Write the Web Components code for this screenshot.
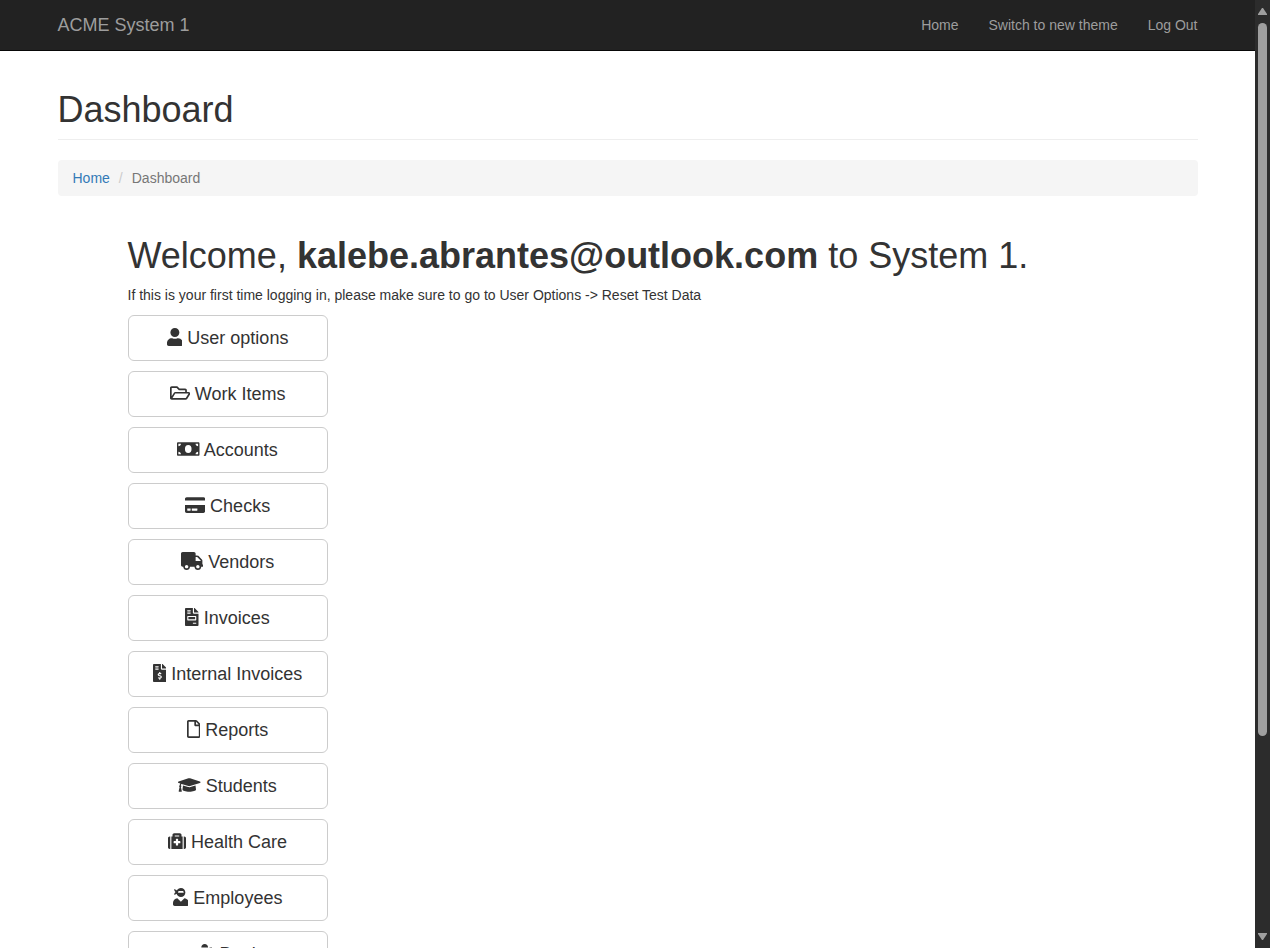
<!DOCTYPE html>
<html lang="en">
<head>
<meta charset="utf-8">
<title>ACME System 1 - Dashboard</title>
<style>
html, body { margin: 0; height: 100%; overflow: hidden; background: #fff; }
body { font: 14px/20px "Liberation Sans", Arial, sans-serif; color: #333; }
</style>
</head>
<body>
<app-shell>
  <site-nav slot="nav" brand="ACME System 1">
    <nav-link>Home</nav-link>
    <nav-link>Switch to new theme</nav-link>
    <nav-link>Log Out</nav-link>
  </site-nav>
  <page-title>Dashboard</page-title>
  <bread-crumb current="Dashboard">Home</bread-crumb>
  <welcome-panel>
    <span slot="title">Welcome, <b>kalebe.abrantes@outlook.com</b> to System 1.</span>
    <span slot="hint">If this is your first time logging in, please make sure to go to User Options -&gt; Reset Test Data</span>
    <menu-button icon="user">User options</menu-button>
    <menu-button icon="folder">Work Items</menu-button>
    <menu-button icon="money">Accounts</menu-button>
    <menu-button icon="card">Checks</menu-button>
    <menu-button icon="truck">Vendors</menu-button>
    <menu-button icon="invoice">Invoices</menu-button>
    <menu-button icon="dollar">Internal Invoices</menu-button>
    <menu-button icon="file">Reports</menu-button>
    <menu-button icon="cap">Students</menu-button>
    <menu-button icon="medkit">Health Care</menu-button>
    <menu-button icon="ninja">Employees</menu-button>
    <menu-button icon="piggy">Bank</menu-button>
  </welcome-panel>
</app-shell>
<script>
const ICONS = {
  user: [448, "M224 256c70.7 0 128-57.3 128-128S294.7 0 224 0 96 57.3 96 128s57.3 128 128 128zm89.6 32h-16.7c-22.2 10.2-46.9 16-72.9 16s-50.6-5.8-72.9-16h-16.7C60.2 288 0 348.2 0 422.4V464c0 26.5 21.5 48 48 48h352c26.5 0 48-21.5 48-48v-41.6c0-74.2-60.2-134.4-134.4-134.4z"],
  folder: [576, "M527.9 224H480v-48c0-26.5-21.5-48-48-48H272l-64-64H48C21.5 64 0 85.5 0 112v288c0 26.5 21.5 48 48 48h400c16.5 0 31.9-8.5 40.7-22.6l79.9-128c20-31.9-3-73.4-40.7-73.4zM48 118c0-3.3 2.7-6 6-6h134.1l64 64H426c3.3 0 6 2.7 6 6v42H152c-16.8 0-32.4 8.8-41.1 23.2L48 351.4zm400 282H72l77.2-128H528z"],
  money: [640, "M608 64H32C14.33 64 0 78.33 0 96v320c0 17.67 14.33 32 32 32h576c17.67 0 32-14.33 32-32V96c0-17.67-14.33-32-32-32zM40 408v-72c40 0 72 32 72 72H40zm0-232v-72h72c0 40-32 72-72 72zM320 368a94 112 0 1 1 0-224 94 112 0 0 1 0 224zM600 408h-72c0-40 32-72 72-72v72zm0-232c-40 0-72-32-72-72h72v72z"],
  card: [576, "M0 432c0 26.5 21.5 48 48 48h480c26.5 0 48-21.5 48-48V256H0v176zm192-68c0-6.6 5.4-12 12-12h136c6.6 0 12 5.4 12 12v40c0 6.6-5.4 12-12 12H204c-6.6 0-12-5.4-12-12v-40zm-128 0c0-6.6 5.4-12 12-12h72c6.6 0 12 5.4 12 12v40c0 6.6-5.4 12-12 12H76c-6.6 0-12-5.4-12-12v-40zM576 80v48H0V80c0-26.5 21.5-48 48-48h480c26.5 0 48 21.5 48 48z"],
  truck: [640, "M624 352h-16V243.9c0-12.7-5.1-24.9-14.1-33.9L494 110.1c-9-9-21.2-14.1-33.9-14.1H416V48c0-26.5-21.5-48-48-48H48C21.5 0 0 21.5 0 48v320c0 26.5 21.5 48 48 48h16c0 53 43 96 96 96s96-43 96-96h128c0 53 43 96 96 96s96-43 96-96h48c8.8 0 16-7.2 16-16v-32c0-8.8-7.2-16-16-16zM160 464c-26.5 0-48-21.5-48-48s21.5-48 48-48 48 21.5 48 48-21.5 48-48 48zm320 0c-26.5 0-48-21.5-48-48s21.5-48 48-48 48 21.5 48 48-21.5 48-48 48zm80-208H416V144h44.1l99.9 99.9V256z"],
  invoice: [384, "M288 256H96v64h192v-64zm89-151L279.1 7c-4.5-4.5-10.6-7-17-7H256v128h128v-6.1c0-6.3-2.5-12.4-7-16.9zm-153 31V0H24C10.7 0 0 10.7 0 24v464c0 13.3 10.7 24 24 24h336c13.3 0 24-10.7 24-24V160H248c-13.2 0-24-10.8-24-24zM64 72c0-4.42 3.58-8 8-8h80c4.42 0 8 3.58 8 8v16c0 4.42-3.58 8-8 8H72c-4.42 0-8-3.58-8-8V72zm0 64c0-4.42 3.58-8 8-8h80c4.42 0 8 3.58 8 8v16c0 4.42-3.58 8-8 8H72c-4.42 0-8-3.58-8-8v-16zm256 304c0 4.42-3.58 8-8 8h-80c-4.42 0-8-3.58-8-8v-16c0-4.42 3.58-8 8-8h80c4.42 0 8 3.58 8 8v16zm0-200v96c0 8.84-7.16 16-16 16H80c-8.84 0-16-7.16-16-16v-96c0-8.84 7.16-16 16-16h224c8.84 0 16 7.16 16 16z"],
  dollar: [384, "M377 105L279.1 7c-4.5-4.5-10.6-7-17-7H256v128h128v-6.1c0-6.3-2.5-12.4-7-16.9zm-153 31V0H24C10.7 0 0 10.7 0 24v464c0 13.3 10.7 24 24 24h336c13.3 0 24-10.7 24-24V160H248c-13.2 0-24-10.8-24-24zM64 72c0-4.42 3.58-8 8-8h80c4.42 0 8 3.58 8 8v16c0 4.42-3.58 8-8 8H72c-4.42 0-8-3.58-8-8V72zm0 80v-16c0-4.42 3.58-8 8-8h80c4.42 0 8 3.58 8 8v16c0 4.42-3.58 8-8 8H72c-4.42 0-8-3.58-8-8zm144 263.88V440c0 4.42-3.58 8-8 8h-16c-4.42 0-8-3.58-8-8v-24.29c-11.29-.58-22.27-4.52-31.37-11.35-3.9-2.93-4.1-8.77-.57-12.14l11.75-11.21c2.77-2.64 6.89-2.76 10.13-.73 3.87 2.42 8.26 3.72 12.82 3.72h28.11c6.5 0 11.8-5.92 11.8-13.19 0-5.95-3.61-11.19-8.77-12.73l-45-13.5c-18.59-5.58-31.58-23.42-31.58-43.39 0-24.52 19.05-44.44 42.67-45.07V232c0-4.42 3.58-8 8-8h16c4.42 0 8 3.58 8 8v24.29c11.29.58 22.27 4.51 31.37 11.35 3.9 2.93 4.1 8.77.57 12.14l-11.75 11.21c-2.77 2.64-6.89 2.76-10.13.73-3.87-2.43-8.26-3.72-12.82-3.72h-28.11c-6.5 0-11.8 5.92-11.8 13.19 0 5.95 3.61 11.19 8.77 12.73l45 13.5c18.59 5.58 31.58 23.42 31.58 43.39 0 24.53-19.05 44.44-42.67 45.07z"],
  file: [384, "M369.9 97.9L286 14C277 5 264.8-.1 252.1-.1H48C21.5 0 0 21.5 0 48v416c0 26.5 21.5 48 48 48h288c26.5 0 48-21.5 48-48V131.9c0-12.7-5.1-25-14.1-34zM332.1 128H256V51.9l76.1 76.1zM48 464V48h160v104c0 13.3 10.7 24 24 24h104v288H48z"],
  cap: [640, "M622.34 153.2L343.4 67.5c-15.2-4.67-31.6-4.67-46.79 0L17.66 153.2c-23.54 7.23-23.54 38.36 0 45.59l48.63 14.94c-10.67 13.19-17.23 29.28-17.88 46.9C38.78 266.15 32 276.11 32 288c0 10.78 5.68 19.85 13.86 25.65L20.33 428.53C18.11 438.52 25.71 448 35.94 448h56.11c10.24 0 17.84-9.48 15.62-19.47L82.14 313.65C90.32 307.85 96 298.78 96 288c0-11.57-6.47-21.25-15.66-26.87.76-15.02 8.44-28.3 20.69-36.72L296.6 284.5c9.06 2.78 26.44 6.25 46.79 0l278.95-85.7c23.55-7.24 23.55-38.36 0-45.6zM352.79 315.09c-28.53 8.76-52.84 3.92-65.59 0l-145.02-44.55L128 384c0 35.35 85.96 64 192 64s192-28.65 192-64l-14.18-113.47-145.03 44.56z"],
  medkit: [512, "M96 480h320V128h-32V80c0-26.5-21.5-48-48-48H176c-26.5 0-48 21.5-48 48v48H96v352zm96-384h128v32H192V96zm320 80v256c0 26.5-21.5 48-48 48h-16V128h16c26.5 0 48 21.5 48 48zM64 480H48c-26.5 0-48-21.5-48-48V176c0-26.5 21.5-48 48-48h16v352zm288-208v32c0 8.8-7.2 16-16 16h-48v48c0 8.8-7.2 16-16 16h-32c-8.8 0-16-7.2-16-16v-48h-48c-8.8 0-16-7.2-16-16v-32c0-8.8 7.2-16 16-16h48v-48c0-8.8 7.2-16 16-16h32c8.8 0 16 7.2 16 16v48h48c8.8 0 16 7.2 16 16z"],
  ninja: [448, "M325.4 289.2L224 390.6 122.6 289.2C54 295.3 0 352.2 0 422.4V464c0 26.5 21.5 48 48 48h352c26.5 0 48-21.5 48-48v-41.6c0-70.2-54-127.1-122.6-133.2zM32 192c27.3 0 51.8-11.5 69.2-29.7 15.1 53.9 64 93.7 122.8 93.7 70.7 0 128-57.3 128-128S294.7 0 224 0c-50.4 0-93.6 29.4-114.5 71.8C92.1 47.8 64 32 32 32c0 33.4 17.1 62.8 43.1 80-26 17.2-43.1 46.6-43.1 80zm134-108h116c12 0 22 20 22 54H144c0-34 10-54 22-54z"],
  piggy: [576, "M560 224h-29.5c-8.8-20-21.6-37.7-37.4-52.5L512 96h-32c-29.4 0-55.4 13.5-73 34.3-7.6-1.1-15.1-2.3-23-2.3H256c-77.4 0-141.9 55-156.8 128H56c-14.8 0-26.5-13.5-23.5-28.8C34.7 215.8 45.4 208 57 208h1c3.3 0 6-2.7 6-6v-20c0-3.3-2.7-6-6-6-28.5 0-53.9 20.4-57.5 48.6C-3.9 258.8 22.7 288 56 288h40c0 52.2 25.4 98.1 64 127.3V496c0 8.8 7.2 16 16 16h64c8.8 0 16-7.2 16-16v-48h128v48c0 8.8 7.2 16 16 16h64c8.8 0 16-7.2 16-16v-80.7c11.8-8.9 22.3-19.4 31.3-31.3H560c8.8 0 16-7.2 16-16V240c0-8.8-7.2-16-16-16zm-128 64c-8.8 0-16-7.2-16-16s7.2-16 16-16 16 7.2 16 16-7.2 16-16 16zM256 96h128c5.4 0 10.7.4 15.9.8 0-.3.1-.5.1-.8 0-53-43-96-96-96s-96 43-96 96c0 2.1.5 4.1.6 6.2 15.2-3.9 31-6.2 47.4-6.2z"]
};

function define(name, render) {
  customElements.define(name, class extends HTMLElement {
    constructor() {
      super();
      this.attachShadow({ mode: "open" });
    }
    connectedCallback() {
      const template = document.createElement("template");
      template.innerHTML = render(this);
      this.shadowRoot.replaceChildren(template.content.cloneNode(true));
    }
  });
}

define("app-shell", () => `
  <style>
    :host { display: flex; height: 100vh; }
    .view { flex: 1; min-width: 0; overflow: hidden; }
    main { max-width: 1140px; margin: 0 auto; padding: 40px 15px 0; }
  </style>
  <div class="view"><slot name="nav"></slot><main><slot></slot></main></div>
  <scroll-track></scroll-track>`);

define("scroll-track", () => `
  <style>
    :host { display: flex; flex-direction: column; align-items: center; gap: 8px;
      box-sizing: border-box; width: 15px; padding: 8px 0; background: #2c2c2c; }
    .rail { flex: 1; width: 9px; }
    .thumb { height: 79%; border-radius: 5px; background: #9f9f9f; }
    svg { display: block; fill: #9f9f9f; }
  </style>
  <svg width="9" height="7" viewBox="0 0 9 7"><path d="M4 0h1l4 6v1H0V6z"/></svg>
  <div class="rail"><div class="thumb"></div></div>
  <svg width="9" height="7" viewBox="0 0 9 7"><path d="M4 7h1l4-6V0H0v1z"/></svg>`);

define("site-nav", el => `
  <style>
    :host { display: block; background: #222; border-bottom: 1px solid #080808; }
    nav { display: flex; justify-content: space-between; max-width: 1140px; margin: 0 auto;
      padding: 15px; }
    .links { display: flex; gap: 30px; }
    a { font-size: 18px; color: #9d9d9d; text-decoration: none; }
  </style>
  <nav><a href="#">${el.getAttribute("brand")}</a><div class="links"><slot></slot></div></nav>`);

define("nav-link", () => `
  <style>
    :host { display: block; }
    a { color: #9d9d9d; text-decoration: none; }
  </style>
  <a href="#"><slot></slot></a>`);

define("page-title", () => `
  <style>
    :host { display: block; padding-bottom: 10px; border-bottom: 1px solid #eee; }
    h1 { margin: 0; font-size: 36px; line-height: 38px; font-weight: 400; }
  </style>
  <h1><slot></slot></h1>`);

define("bread-crumb", el => `
  <style>
    :host { display: block; margin-top: 20px; }
    ol { display: flex; margin: 0; padding: 8px 15px; list-style: none;
      background: #f5f5f5; border-radius: 4px; }
    a { color: #337ab7; text-decoration: none; }
    li + li { color: #777; }
    li + li::before { content: "/"; padding: 0 9px; color: #ccc; }
  </style>
  <ol><li><a href="#"><slot></slot></a></li><li>${el.getAttribute("current")}</li></ol>`);

define("welcome-panel", () => `
  <style>
    :host { display: block; padding: 40px 70px; }
    h1 { margin: 0; font-size: 36px; line-height: 40px; font-weight: 400; }
    p { margin: 9px 0 10px; }
    .menu { display: grid; grid-template-columns: 200px; gap: 10px; }
  </style>
  <h1><slot name="title"></slot></h1>
  <p><slot name="hint"></slot></p>
  <div class="menu"><slot></slot></div>`);

define("menu-button", el => {
  const [width, path] = ICONS[el.getAttribute("icon")];
  return `
  <style>
    :host { display: block; }
    button { display: block; width: 100%; margin: 0; padding: 10px 16px; font: inherit;
      font-size: 18px; line-height: 24px; color: #333; background: #fff;
      border: 1px solid #ccc; border-radius: 6px; cursor: pointer; }
    svg { height: 18px; vertical-align: -2px; fill: currentColor; }
  </style>
  <button type="button"><svg viewBox="0 0 ${width} 512" aria-hidden="true"><path fill-rule="evenodd" d="${path}"/></svg> <slot></slot></button>`;
});
</script>
</body>
</html>
